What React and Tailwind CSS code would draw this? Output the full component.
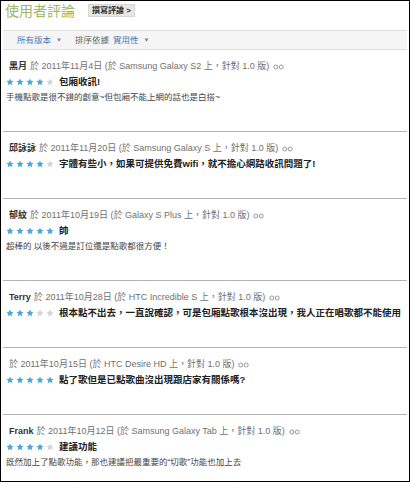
import React from "react";

const reviews = [
  { author: "黑月", date: "2011年11月4日", device: "Samsung Galaxy S2", stars: 4, title: "包廂收訊!", body: "手機點歌是很不錯的創意~但包廂不能上網的話也是白搭~" },
  { author: "邱詠詠", date: "2011年11月20日", device: "Samsung Galaxy S", stars: 4, title: "字體有些小，如果可提供免費wifi，就不擔心網路收訊問題了!", body: "" },
  { author: "郁紋", date: "2011年10月19日", device: "Galaxy S Plus", stars: 5, title: "帥", body: "超棒的 以後不過是訂位還是點歌都很方便！" },
  { author: "Terry", date: "2011年10月28日", device: "HTC Incredible S", stars: 3, title: "根本點不出去，一直說確認，可是包廂點歌根本沒出現，我人正在唱歌都不能使用", body: "" },
  { author: "", date: "2011年10月15日", device: "HTC Desire HD", stars: 5, title: "點了歌但是已點歌曲沒出現跟店家有關係嗎?", body: "" },
  { author: "Frank", date: "2011年10月12日", device: "Samsung Galaxy Tab", stars: 4, title: "建議功能", body: "既然加上了點歌功能，那也建議把最重要的“切歌”功能也加上去" },
];

function Star({ on }) {
  return (
    <svg width="8" height="8" viewBox="0 0 24 24" className="block">
      <path
        d="M12 1.5l3.1 7.1 7.6.7-5.8 5 1.8 7.5L12 17.8l-6.7 4 1.8-7.5-5.8-5 7.6-.7z"
        fill={on ? "#4aa6d6" : "#d4d4d4"}
      />
    </svg>
  );
}

function Spam() {
  return (
    <svg width="11" height="6" viewBox="0 0 11 6" className="inline-block ml-[4px]">
      <circle cx="2.8" cy="3" r="2" fill="none" stroke="#9a9a9a" strokeWidth="1" />
      <circle cx="8.2" cy="3" r="2" fill="none" stroke="#9a9a9a" strokeWidth="1" />
    </svg>
  );
}

function Review({ r, last }) {
  return (
    <div className={"pt-[10px] pb-[26px] " + (last ? "" : "border-b border-[#b4b4b4]")}>
      <div className="h-[14px] flex items-center pl-[6px] text-[9px] text-[#707070] whitespace-nowrap">
        {r.author && <span className="font-bold text-[#333] mr-[3px]">{r.author}</span>}
        <span>於 {r.date} (於 {r.device} 上，針對 1.0 版)</span>
        <Spam />
      </div>
      <div className="h-[16px] flex items-center pl-[3px]">
        <div className="flex gap-[2px]">
          {[1, 2, 3, 4, 5].map((i) => (
            <Star key={i} on={i <= r.stars} />
          ))}
        </div>
        <span className="ml-[5px] text-[9.5px] font-bold text-[#222] whitespace-nowrap">{r.title}</span>
      </div>
      {r.body && (
        <div className="h-[15px] flex items-center pl-[3px] text-[8.5px] text-[#444] whitespace-nowrap">
          {r.body}
        </div>
      )}
    </div>
  );
}

export default function App() {
  return (
    <div className="w-[410px] h-[482px] bg-white border border-black overflow-hidden font-['Liberation_Sans','Noto_Sans_CJK_TC',sans-serif]">
      <div className="h-[29px] flex items-start pt-[2px] pl-[4px]">
        <span className="text-[14px] leading-[16px] text-[#9cb861]">使用者評論</span>
        <span className="ml-[13px] mt-[1px] h-[13px] px-[3px] flex items-center bg-[#e6e6e6] border border-[#d6d6d6] text-[8px] font-bold text-[#333]">
          撰寫評論 &gt;
        </span>
      </div>
      <div className="mx-[2px] h-[20px] bg-[#f5f5f5] border-y border-[#e0e0e0] flex items-center pl-[14px] text-[8.5px]">
        <span className="text-[#4a78b0]">所有版本</span>
        <span className="ml-[5px] text-[6px] text-[#888]">▼</span>
        <span className="ml-[13px] text-[#666]">排序依據</span>
        <span className="ml-[4px] text-[#4a78b0]">實用性</span>
        <span className="ml-[5px] text-[6px] text-[#888]">▼</span>
      </div>
      <div className="mx-[2px]">
        {reviews.map((r, i) => (
          <Review key={i} r={r} last={i === reviews.length - 1} />
        ))}
      </div>
    </div>
  );
}
